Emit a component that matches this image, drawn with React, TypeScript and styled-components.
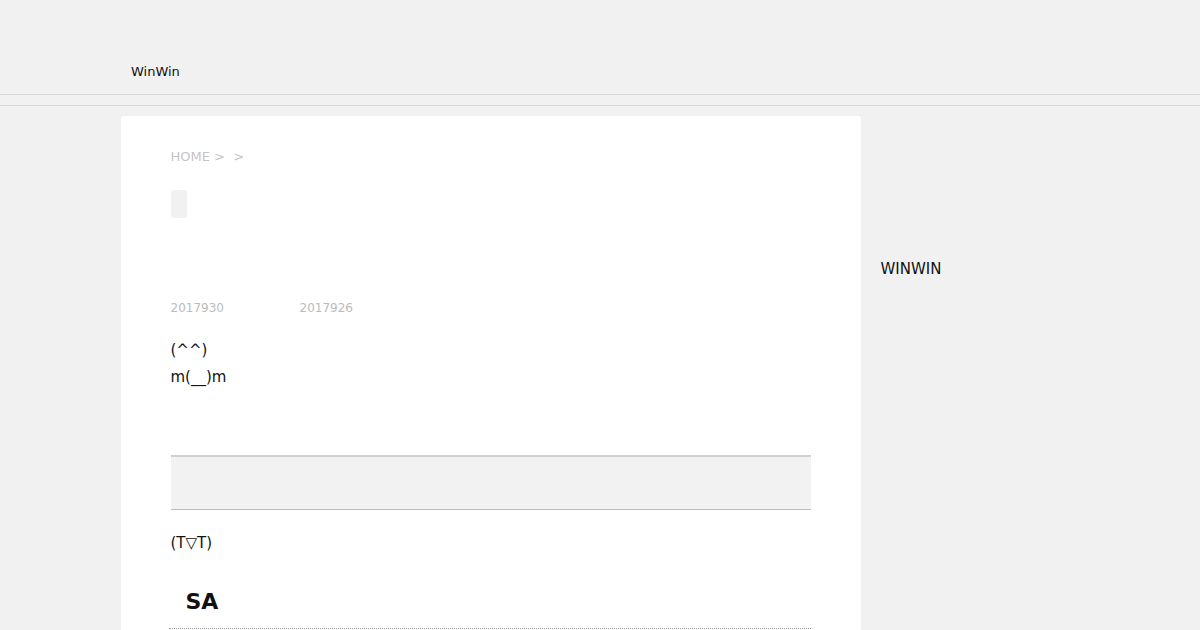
import styled, { createGlobalStyle } from "styled-components";

const GlobalStyle = createGlobalStyle`
  html, body {
    margin: 0;
    padding: 0;
    background: #f1f1f1;
    font-family: "DejaVu Sans", Verdana, sans-serif;
    color: #111;
  }
`;

const Header = styled.header`
  height: 94px;
  border-bottom: 1px solid #d8d8d8;
`;

const HeaderInner = styled.div`
  width: 960px;
  margin: 0 auto;
  padding: 64px 0 0 11px;
  box-sizing: border-box;
  font-size: 13px;
  line-height: 16px;
`;

const NavBar = styled.nav`
  height: 10px;
  border-bottom: 1px solid #d8d8d8;
`;

const Wrap = styled.div`
  width: 960px;
  margin: 10px auto 0;
  padding-left: 1px;
  display: flex;
  gap: 20px;
  align-items: flex-start;
`;

const Main = styled.main`
  width: 740px;
  flex-shrink: 0;
  background: #fff;
  border-radius: 3px 3px 0 0;
  padding: 33px 50px 0;
  box-sizing: border-box;
  min-height: 520px;
`;

const Crumbs = styled.div`
  font-size: 13px;
  line-height: 16px;
  color: #c4c4c4;
`;

const Tag = styled.span`
  display: block;
  width: 16px;
  height: 28px;
  margin-top: 25px;
  background: #f1f1f1;
  border-radius: 2px;
`;

const Dates = styled.div`
  display: flex;
  margin-top: 83px;
  font-size: 12px;
  line-height: 14px;
  color: #bbb;
`;

const DateItem = styled.span<{ $w?: number }>`
  width: ${(p) => (p.$w ? `${p.$w}px` : "auto")};
`;

const Body = styled.div`
  margin-top: 22px;
  font-size: 15px;
  line-height: 27px;
`;

const Box = styled.div`
  margin-top: 64px;
  height: 52px;
  background: #f2f2f2;
  border-top: 2px solid #d0d0d0;
  border-bottom: 1px solid #bdbdbd;
`;

const Para = styled.p`
  margin: 20px 0 0;
  font-size: 15px;
  line-height: 27px;
`;

const Heading = styled.h2`
  margin: 31px 0 0 -2px;
  padding: 0 0 12px 17px;
  font-size: 22px;
  line-height: 28px;
  font-weight: bold;
  border-bottom: 1px dotted #999;
`;

const Side = styled.aside`
  width: 200px;
  padding-top: 144px;
  font-size: 15px;
  line-height: 18px;
`;

export default function App() {
  return (
    <>
      <GlobalStyle />
      <Header>
        <HeaderInner>WinWin</HeaderInner>
      </Header>
      <NavBar />
      <Wrap>
        <Main>
          <Crumbs>HOME &gt;&nbsp; &gt;</Crumbs>
          <Tag />
          <Dates>
            <DateItem $w={129}>2017930</DateItem>
            <DateItem>2017926</DateItem>
          </Dates>
          <Body>
            (^^)
            <br />
            m(__)m
          </Body>
          <Box />
          <Para>(T▽T)</Para>
          <Heading>SA</Heading>
        </Main>
        <Side>WINWIN</Side>
      </Wrap>
    </>
  );
}
